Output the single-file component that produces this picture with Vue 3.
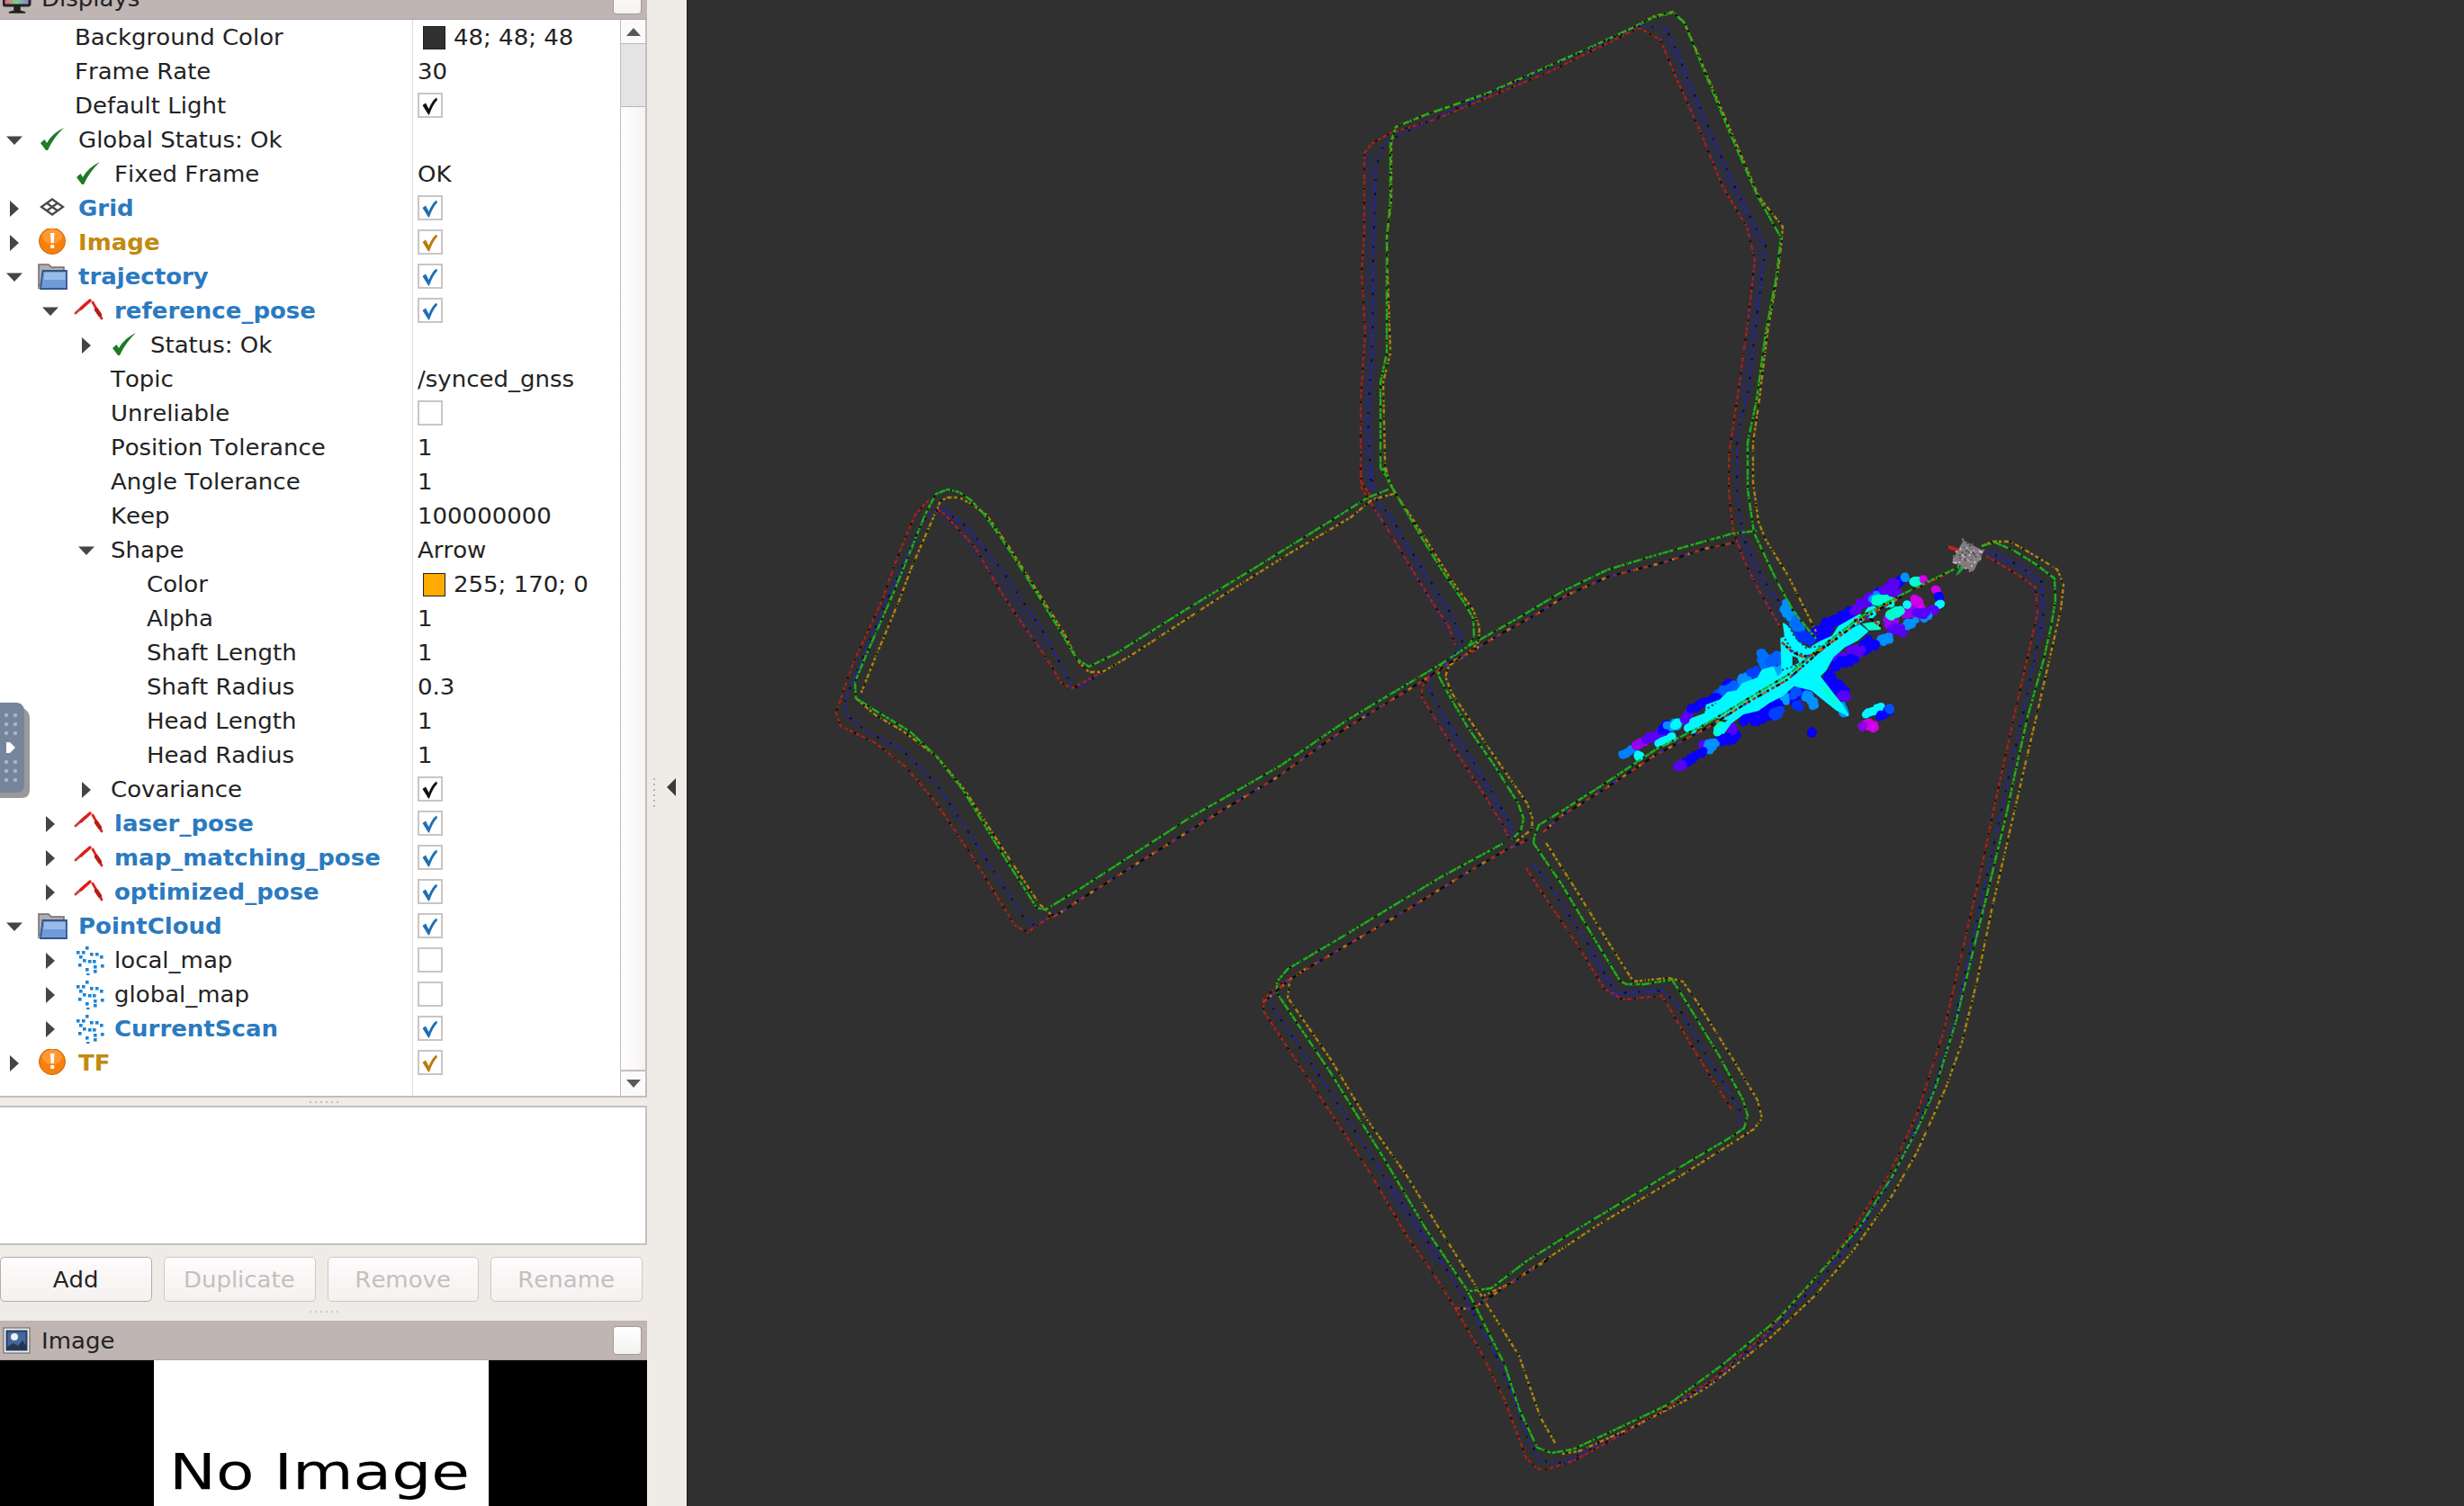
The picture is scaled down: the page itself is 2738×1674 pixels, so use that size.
<script setup>
const rows = [
  { l: 1, t: 'Background Color', sw: '#303030', v: '48; 48; 48' },
  { l: 1, t: 'Frame Rate', v: '30' },
  { l: 1, t: 'Default Light', c: 'black' },
  { l: 0, a: 'down', i: 'ok', t: 'Global Status: Ok' },
  { l: 1, i: 'ok', t: 'Fixed Frame', v: 'OK' },
  { l: 0, a: 'right', i: 'grid', t: 'Grid', k: 'blue', c: 'blue' },
  { l: 0, a: 'right', i: 'warn', t: 'Image', k: 'gold', c: 'gold' },
  { l: 0, a: 'down', i: 'folder', t: 'trajectory', k: 'blue', c: 'blue' },
  { l: 1, a: 'down', i: 'pose', t: 'reference_pose', k: 'blue', c: 'blue' },
  { l: 2, a: 'right', i: 'ok', t: 'Status: Ok' },
  { l: 2, t: 'Topic', v: '/synced_gnss' },
  { l: 2, t: 'Unreliable', c: 'off' },
  { l: 2, t: 'Position Tolerance', v: '1' },
  { l: 2, t: 'Angle Tolerance', v: '1' },
  { l: 2, t: 'Keep', v: '100000000' },
  { l: 2, a: 'down', t: 'Shape', v: 'Arrow' },
  { l: 3, t: 'Color', sw: '#ffaa00', v: '255; 170; 0' },
  { l: 3, t: 'Alpha', v: '1' },
  { l: 3, t: 'Shaft Length', v: '1' },
  { l: 3, t: 'Shaft Radius', v: '0.3' },
  { l: 3, t: 'Head Length', v: '1' },
  { l: 3, t: 'Head Radius', v: '1' },
  { l: 2, a: 'right', t: 'Covariance', c: 'black' },
  { l: 1, a: 'right', i: 'pose', t: 'laser_pose', k: 'blue', c: 'blue' },
  { l: 1, a: 'right', i: 'pose', t: 'map_matching_pose', k: 'blue', c: 'blue' },
  { l: 1, a: 'right', i: 'pose', t: 'optimized_pose', k: 'blue', c: 'blue' },
  { l: 0, a: 'down', i: 'folder', t: 'PointCloud', k: 'blue', c: 'blue' },
  { l: 1, a: 'right', i: 'cloud', t: 'local_map', c: 'off' },
  { l: 1, a: 'right', i: 'cloud', t: 'global_map', c: 'off' },
  { l: 1, a: 'right', i: 'cloud', t: 'CurrentScan', k: 'blue', c: 'blue' },
  { l: 0, a: 'right', i: 'warn', t: 'TF', k: 'gold', c: 'gold' },
]
const checkColors = { black: '#111', blue: '#1f6fb5', gold: '#b87a0a' }
const buttons = ['Add', 'Duplicate', 'Remove', 'Rename']
const cloudDots = [[13, 1], [3, 6], [9, 6], [18, 8], [24, 8], [29, 11], [6, 11], [10, 15], [16, 16], [21, 16], [5, 20], [22, 22], [30, 21], [22, 27], [13, 25], [14, 31]]
const gripDots = [795, 805, 815, 847, 857, 867]

/* Trajectory polylines in view coordinates, one list per pose topic. */
const green = [
  '1544,535 1534,520 1534,425 1541,392 1541,264 1545,222 1545,159 1551,141 1583,128 1652,104 1704,81 1773,50 1816,30 1838,19 1859,14 1871,24 1890,70 1924,152 1953,218 1979,264 1974,307 1962,370 1952,444 1942,492 1942,544 1949,592 1973,643 1993,680 2018,710',
  '1537,520 1547,542 1580,598 1603,635 1627,670 1637,687 1638,707 1632,718 1603,737 1598,750 1607,767 1630,807 1660,850 1687,893 1693,910 1690,923 1680,933',
  '1543,544 1520,553 1477,580 1385,637 1317,678 1239,727 1210,741 1196,732 1181,706 1150,656 1118,606 1094,572 1079,556 1066,547 1053,544 1040,549 1028,572 992,661 963,727 950,758 951,776 973,790 1011,813 1040,840 1070,878 1108,940 1152,1009 1162,1011 1200,988 1322,909 1423,851 1496,801 1603,737',
  '1632,718 1650,708 1687,687 1737,657 1787,633 1840,617 1925,593 1952,590',
  '1704,937 1705,930 1710,917 1733,903 1780,873 1840,833 1897,804 1940,778 1987,750 2020,722 2067,686 2113,661 2177,630',
  '2202,607 2217,603 2238,612 2262,627 2283,643 2284,667 2279,697 2271,733 2253,797 2239,860 2230,903 2210,986 2193,1055 2173,1137 2150,1211 2133,1250 2103,1307 2067,1363 2030,1406 1977,1465 1914,1517 1854,1561 1795,1589 1748,1611 1724,1615 1708,1609 1688,1566 1672,1517 1637,1447 1629,1432 1585,1367 1538,1288 1479,1193 1419,1104 1419,1091 1431,1077 1487,1044 1538,1013 1601,975 1673,936',
  '1704,937 1736,984 1775,1049 1800,1090 1807,1094 1827,1094 1858,1089 1874,1114 1910,1173 1937,1223 1942,1240 1938,1254 1925,1263 1854,1305 1755,1365 1696,1402 1657,1432 1633,1435',
]
const orange = [
  '1550,548 1539,525 1539,514 1537,425 1545,392 1542,307 1541,264 1546,222 1546,159 1551,141 1583,128 1652,104 1704,81 1773,50 1816,30 1838,18 1859,13 1872,26 1891,70 1926,152 1954,218 1981,252 1979,275 1975,307 1964,370 1955,444 1948,492 1948,536 1954,580 1962,600 1987,640 2018,702',
  '1540,520 1543,535 1553,552 1583,597 1613,645 1637,678 1644,697 1643,713 1633,725 1610,740 1606,752 1613,770 1633,800 1667,850 1697,893 1703,910 1702,922 1685,935',
  '1549,549 1525,555 1501,575 1433,615 1360,661 1259,727 1225,747 1210,747 1198,735 1182,703 1152,656 1120,606 1096,572 1079,560 1066,553 1053,553 1045,557 1012,633 999,668 973,730 957,770',
  '951,776 973,795 1004,813 1041,841 1072,878 1112,940 1155,1005 1171,1019',
  '2202,607 2214,602 2234,602 2255,614 2286,633 2293,650 2290,677 2278,730 2262,800 2248,860 2233,925 2213,1012 2197,1090 2180,1159 2163,1207 2148,1241 2130,1281 2103,1328 2060,1389 2017,1440 1967,1487 1900,1540 1874,1556 1815,1586 1755,1613 1736,1616',
  '1728,1604 1712,1576 1706,1559 1688,1507 1649,1445 1637,1425 1597,1362 1562,1305 1518,1243 1479,1178 1431,1109 1433,1089 1455,1074',
  '1718,937 1748,984 1787,1047 1815,1091 1854,1087 1870,1091 1886,1114 1926,1178 1953,1223 1958,1243 1949,1255 1874,1303 1775,1362 1677,1427 1649,1440',
]
const red = [
  '1523,551 1512,535 1512,444 1517,370 1513,303 1516,259 1516,170 1525,159 1545,148 1594,133 1659,106 1721,80 1780,51 1821,31 1845,44 1862,85 1891,150 1914,207 1941,252 1950,289 1943,351 1933,425 1921,507 1921,547 1926,590 1938,623 1955,657 1978,697',
  '1512,520 1513,543 1527,565 1540,585 1563,623 1590,667 1610,697 1617,717',
  '1610,738 1593,750 1580,763 1580,775 1597,803 1623,843 1647,880 1670,917 1677,933',
  '1225,747 1191,765 1179,759 1162,730 1128,682 1108,651 1084,609 1050,572 1040,565',
  '1032,556 1017,572 997,620 980,668 948,737 929,792 934,807 973,826 1006,852 1040,892 1079,950 1128,1029 1142,1036 1171,1016',
  '2165,637 2130,654',
  '2207,618 2241,638 2262,653 2264,680 2257,713 2241,783 2224,860 2200,973 2180,1059 2160,1146 2130,1239 2100,1304 2050,1380 2013,1426 1960,1485 1900,1536 1803,1594 1748,1624 1716,1634 1708,1632 1696,1621 1672,1556 1645,1502 1617,1454 1597,1422 1562,1372 1522,1303 1463,1213 1404,1124 1404,1111 1419,1096 1455,1076',
  '1696,965 1708,984 1752,1049 1783,1099 1803,1111 1847,1107 1886,1173 1926,1236',
]
const blue = [
  '1524,545 1523,533 1520,462 1525,388 1526,277 1529,185 1538,159 1597,130 1738,67 1824,28 1852,33 1859,48 1876,89 1902,150 1931,215 1962,274 1957,314 1950,370 1943,433 1930,488 1930,551 1938,600 1959,643 1983,677',
  '1522,523 1530,557 1545,573 1560,600 1590,647 1613,683 1625,713 1613,733 1590,752 1588,765 1603,793 1627,830 1653,873 1677,913 1682,933',
  '1225,748 1200,764 1191,763 1176,733 1157,699 1113,633 1074,585 1045,565 1026,578 985,668 939,778 941,795 963,813 1002,833 1040,871 1084,937 1137,1019 1150,1029 1176,1012',
  '2207,613 2241,627 2269,647 2271,680 2260,737 2245,807 2233,860 2210,964 2187,1068 2167,1155 2147,1215 2103,1309 2063,1374 2020,1426 1963,1485 1900,1538 1803,1594 1736,1626 1712,1624 1696,1596 1684,1559 1665,1512 1633,1452 1605,1407 1538,1308 1471,1203 1415,1121 1411,1109',
  '1704,960 1724,987 1763,1047 1795,1104 1847,1101 1862,1114 1902,1183 1933,1233 1933,1253',
]
/* Stretches where several pose traces lie on top of each other. */
const shared = [
  '1171,1019 1200,1000 1268,957 1356,902 1419,864 1496,809 1579,758 1612,736 1640,722',
  '1633,725 1667,705 1707,683 1740,662 1787,641 1849,625 1894,610 1928,603',
  '1404,1114 1433,1089 1455,1075 1554,1017 1617,978 1640,964 1673,945 1700,932',
  '1715,925 1733,908 1780,879 1840,839 1897,809 1940,782 1987,755 2022,724 2067,690 2113,663',
  '2060,689 2078,688 2090,696',
  '1980,714 1992,725 2003,730 2016,728 2028,718',
  '1617,1454 1636,1455 1676,1428 1720,1400',
]
const haze = [
  '1521,540 1520,450 1524,370 1523,280 1524,170',
  '1848,34 1866,70 1880,110 1905,170 1935,225 1955,275 1951,330 1944,390 1936,445',
  '1527,562 1550,592 1575,638 1620,712',
  '1592,790 1615,822 1650,876 1678,925',
  '1048,566 1074,594 1110,645 1160,722',
  '1934,600 1950,640 1978,690',
  '2210,614 2250,634 2267,660 2266,710',
  '1536,1310 1560,1345 1600,1405',
  '1765,1058 1796,1106 1846,1102',
]

/* Lidar scan: deterministic scatter of round points around short segments. */
let seed = 7
const rnd = () => {
  seed = (seed * 16807) % 2147483647
  return seed / 2147483647
}
const B = '#0a00ff'
const V = '#5a00f5'
const L = '#0090ff'
const C = '#00f8ff'
const T = '#00ffd0'
const M = '#d000e8'
const strips = [
  [720, 205, 835, 155, 17, B, 22], [730, 235, 760, 205, 8, B, 5], [840, 140, 930, 90, 14, V, 14], [920, 95, 1000, 50, 14, B, 13],
  [940, 90, 985, 65, 22, V, 12], [900, 105, 920, 95, 6, L, 4], [1010, 32, 1014, 36, 4, L, 3], [1040, 45, 1056, 52, 8, T, 7],
  [1070, 40, 1074, 42, 4, M, 3], [1112, 76, 1116, 80, 6, M, 4], [1122, 96, 1126, 106, 6, B, 4], [1122, 126, 1130, 122, 4, C, 4],
  [1085, 158, 1110, 138, 8, V, 7], [1090, 160, 1070, 170, 6, L, 4], [1040, 185, 1010, 195, 10, L, 7], [1045, 110, 1055, 130, 12, M, 9],
  [1015, 150, 1040, 150, 12, '#9a00f0', 8], [960, 180, 975, 200, 15, '#9a00f0', 10], [965, 205, 1000, 215, 15, V, 10],
  [1050, 160, 1080, 155, 10, V, 6],
  [930, 245, 955, 238, 9, L, 7], [905, 250, 870, 275, 18, B, 14], [860, 275, 775, 325, 20, V, 20], [840, 300, 770, 335, 13, B, 12],
  [745, 360, 805, 425, 14, B, 18], [800, 425, 815, 432, 8, V, 5], [690, 400, 625, 438, 13, B, 14], [650, 415, 640, 425, 8, '#0050ff', 4],
  [600, 450, 545, 485, 17, B, 16], [550, 490, 480, 515, 18, B, 18], [590, 485, 560, 495, 12, '#0040ff', 6], [648, 455, 655, 468, 8, '#0030ff', 5],
  [680, 425, 710, 460, 9, L, 10], [450, 560, 395, 580, 14, B, 14], [425, 532, 440, 545, 10, V, 6], [345, 590, 335, 595, 7, V, 4],
  [375, 590, 350, 605, 12, L, 7], [340, 615, 275, 655, 6, B, 12], [270, 655, 245, 672, 9, V, 7], [65, 630, 110, 606, 5, '#0080ff', 8],
  [112, 600, 140, 585, 7, '#9a00f0', 6], [145, 580, 215, 545, 9, V, 13], [200, 545, 220, 530, 9, B, 6], [225, 530, 260, 520, 12, L, 8],
  [280, 515, 285, 495, 14, V, 8], [300, 475, 355, 445, 10, B, 12], [385, 430, 400, 420, 9, '#0050ff', 8], [415, 400, 435, 385, 9, B, 6],
  [355, 450, 385, 435, 9, B, 6], [400, 415, 470, 385, 8, '#0060ff', 8],
  [465, 380, 485, 368, 8, L, 8], [500, 360, 515, 350, 9, '#0040ff', 6], [530, 285, 545, 330, 12, '#0070ff', 12], [560, 325, 600, 300, 15, '#0060ff', 12],
  [605, 125, 640, 175, 11, L, 14], [640, 175, 660, 220, 12, '#0070ff', 12], [650, 235, 695, 240, 14, '#0030ff', 10],
  [190, 588, 215, 580, 5, C, 5], [230, 566, 233, 572, 5, C, 5], [120, 628, 126, 634, 5, C, 5], [915, 110, 960, 118, 10, T, 12],
  [900, 148, 890, 155, 8, C, 6], [880, 492, 930, 468, 5, C, 8], [920, 502, 965, 475, 6, B, 8], [955, 475, 962, 472, 5, '#0050ff', 4],
  [880, 522, 905, 535, 10, M, 9], [866, 535, 872, 530, 4, '#8a00e0', 3], [696, 550, 702, 555, 5, '#0800f0', 5],
  [960, 165, 998, 145, 8, T, 8], [1015, 125, 1020, 125, 4, C, 3], [385, 548, 405, 530, 8, T, 6], [285, 540, 310, 525, 12, C, 8], [240, 530, 250, 525, 8, C, 4],
  [800, 465, 812, 490, 7, L, 7], [575, 350, 605, 345, 8, '#00a0ff', 5], [605, 420, 610, 445, 8, '#00a0ff', 5],
]
const points = []
for (const [x1, y1, x2, y2, spread, color, n] of strips) {
  for (let i = 0; i < n * 2; i++) {
    const t = (i + 0.5) / (n * 2)
    points.push({
      x: x1 + (x2 - x1) * t + (rnd() - 0.5) * spread * 1.7,
      y: y1 + (y2 - y1) * t + (rnd() - 0.5) * spread * 1.7,
      r: 11 + rnd() * 3,
      color,
    })
  }
}
const specks = []
for (let i = 0; i < 90; i++) {
  specks.push({ x: rnd() * 28 - 14, y: rnd() * 28 - 14, c: ['#4e4a50', '#c8c0c4', '#7c7478', '#9d8f9e'][i % 4] })
}
</script>

<template>
  <div class="app">
    <div class="sidebar">
      <div class="dock">
        <div class="title top">
          <svg class="ticon" width="32" height="44" viewBox="0 0 32 44">
            <defs>
              <linearGradient id="scr" x1="0" x2="1"><stop offset="0" stop-color="#e0627e" /><stop offset=".5" stop-color="#7fcf8a" /><stop offset="1" stop-color="#8a7be0" /></linearGradient>
            </defs>
            <rect x="1" y="8" width="29" height="20" rx="2" fill="url(#scr)" stroke="#222" stroke-width="3" />
            <path d="M13 29h6v5h-6zM7 36q9-4 18 0z" fill="#222" stroke="#222" stroke-width="1.5" />
          </svg>
          <span class="txt">Displays</span><i class="float" />
        </div>
        <div class="tree">
          <div class="names">
            <div v-for="(r, i) in rows" :key="i" class="row" :style="{ paddingLeft: r.l * 40 + 'px' }">
              <svg class="arrow" width="36" height="20" viewBox="0 0 36 20">
                <path v-if="r.a === 'down'" d="M7 5.500H25L16 15z" fill="#474543" />
                <path v-if="r.a === 'right'" d="M11 1V19L21 10z" fill="#474543" />
              </svg>
              <svg v-if="r.i" class="icon" width="44" height="32" viewBox="0 0 44 32">
                <g v-if="r.i === 'ok'"><path d="M9 19L13.500 15L16 19Q22 8 35 2Q24 12 17 27H15z" fill="#1d7a28" /></g>
                <g v-if="r.i === 'grid'" fill="none" stroke="#4a4a4a" stroke-width="2.300"><path d="M22 5.500L34 14L22 22.500L10 14zM16 9.700L28 18.300M28 9.700L16 18.300" /></g>
                <g v-if="r.i === 'warn'">
                  <circle cx="22" cy="14" r="14.500" fill="#f77f0c" stroke="#c9660a" />
                  <ellipse cx="22" cy="9" rx="11" ry="8" fill="#ffa548" opacity=".7" />
                  <path d="M20 5h4.500l-.8 11h-3z" fill="#fff" /><circle cx="22.200" cy="20" r="2.300" fill="#fff" />
                </g>
                <g v-if="r.i === 'folder'">
                  <path d="M7 29V2h11l3 3h14v20H7z" fill="#b3aeab" stroke="#6f6c6c" stroke-width="1.500" />
                  <path d="M9 29L11.500 9H38V29z" fill="#6f9bd8" stroke="#31558c" stroke-width="1.800" />
                  <path d="M13.500 11H36.500V19H12.500z" fill="#a3c3ee" opacity=".8" />
                </g>
                <g v-if="r.i === 'pose'" stroke-linecap="round" fill="none">
                  <path d="M8 18L19 8" stroke="#c8443e" stroke-width="3" /><path d="M14 13L24 4" stroke="#dd1f1a" stroke-width="3.500" />
                  <path d="M27 6L37 24" stroke="#d42a24" stroke-width="2.800" /><path d="M31 14L35 20" stroke="#b81c18" stroke-width="4.500" />
                </g>
                <g v-if="r.i === 'cloud'" fill="#1b84d8"><rect v-for="(d, j) in cloudDots" :key="j" :x="d[0] + 6" :y="d[1] - 1" width="3.600" height="3.600" /></g>
              </svg>
              <span class="txt" :class="[r.k, { bare: !r.i }]">{{ r.t }}</span>
            </div>
          </div>
          <div class="values">
            <div v-for="(r, i) in rows" :key="i" class="row">
              <svg v-if="r.c" class="check" width="28" height="28" viewBox="0 0 28 28">
                <rect x="1" y="1" width="26" height="26" fill="#fff" stroke="#c9c6c2" stroke-width="2" />
                <path v-if="r.c !== 'off'" d="M5.500 14L9 11.500L12.500 18Q16 9 21 5.500L22 8Q17 13 13 24.500H12z" :fill="checkColors[r.c]" />
              </svg>
              <i v-if="r.sw" class="swatch" :style="{ background: r.sw }" />
              <span v-if="r.v" class="txt">{{ r.v }}</span>
            </div>
          </div>
          <div class="scroll">
            <div class="sbtn up"><svg width="16" height="11"><path d="M0 10L8 1L16 10z" fill="#5a5856" /></svg></div>
            <div class="thumb" />
            <div class="track" />
            <div class="sbtn down"><svg width="16" height="11"><path d="M0 1H16L8 10z" fill="#5a5856" /></svg></div>
          </div>
        </div>
        <div class="split"><i v-for="n in 6" :key="n" /></div>
        <div class="help" />
        <div class="buttons">
          <div v-for="(b, i) in buttons" :key="b" class="btn" :class="{ off: i > 0 }"><span class="txt mid">{{ b }}</span></div>
        </div>
        <div class="split low"><i v-for="n in 6" :key="n" /></div>
        <div class="title">
          <svg class="ticon" width="32" height="44" viewBox="0 0 32 44">
            <rect x="1" y="8" width="29" height="28" fill="#f2f2f2" stroke="#85807e" stroke-width="1.500" />
            <rect x="4.500" y="11.500" width="22" height="21" fill="#43679a" stroke="#253f66" stroke-width="2" />
            <circle cx="13" cy="18" r="4" fill="#e8f0fa" /><path d="M5 29L12 25L17 28L22 22L26 28V32H5z" fill="#26364e" />
          </svg>
          <span class="txt">Image</span><i class="float" />
        </div>
        <div class="image"><div class="canvas"><span class="none">No Image</span></div></div>
      </div>
      <div class="gutter">
        <div class="vdots"><i v-for="n in 6" :key="n" /></div>
        <svg width="10" height="20"><path d="M10 0V20L0 10z" fill="#3d3b39" /></svg>
      </div>
      <svg class="handle" width="34" height="108" viewBox="0 780 34 108">
        <path d="M0 786H24Q33 790 33 798V878Q33 887 24 887H0z" fill="#999" />
        <path d="M0 781H19Q27 782 27 791V872Q27 881 19 881H0z" fill="#75859b" />
        <g fill="#a9b4c3"><template v-for="y in gripDots" :key="y"><rect x="5" :y="y - 2" width="4" height="4" rx="1" /><rect x="15" :y="y - 2" width="4" height="4" rx="1" /></template></g>
        <path d="M7 825H11L17 831L11 837H7z" fill="#fff" />
      </svg>
    </div>

    <svg class="view" width="1974" height="1674" viewBox="764 0 1974 1674">
      <g class="haze"><polyline v-for="(p, i) in haze" :key="i" :points="p" /></g>
      <g class="under"><polyline v-for="(p, i) in green.concat(orange)" :key="i" :points="p" /></g>
      <g class="ln b"><polyline v-for="(p, i) in blue" :key="i" :points="p" /></g>
      <g class="ln r"><polyline v-for="(p, i) in red" :key="i" :points="p" /></g>
      <g fill="none" transform="translate(1780 630) scale(.33333)">
        <circle v-for="(p, i) in points" :key="i" :cx="p.x" :cy="p.y" :r="p.r" :fill="p.color" />
        <path fill="#00f8ff" stroke="#00f8ff" stroke-width="6" stroke-linejoin="round" d="M285 545L305 505L345 490L350 462L395 445L420 420L450 415L470 390L520 372L535 345L570 335L585 370L602 355L598 240L612 235L606 190L625 205L650 250L690 275L725 252L770 232L790 200L860 160L870 178L800 222L740 255L860 195L885 215L850 245L810 265L770 300L745 345L725 365L775 430L800 460L820 495L780 475L700 410L640 395L600 430L560 450L520 478L470 490L430 520L405 555L385 545L425 510L380 500L330 535z" />
        <path fill="#00ffd0" d="M868 190L925 180L930 210L890 212zM800 205L860 165L870 175L800 220zM715 380L760 410L785 455L770 455z" />
        <path fill="#303030" d="M635 298L652 303L658 320L635 330z" />
        <g stroke="#1a4a66" stroke-width="6" stroke-dasharray="7 8"><path d="M610 170L640 230L680 270L730 265M610 240L635 280L690 300M600 345L660 325L700 290M340 480L380 455" /></g>
      </g>
      <g class="ln o"><polyline v-for="(p, i) in orange" :key="i" :points="p" /></g>
      <g class="ln g"><polyline v-for="(p, i) in green" :key="i" :points="p" /></g>
      <template v-for="(p, i) in shared" :key="i">
        <polyline class="mix m1" :points="p" /><polyline class="mix m2" :points="p" /><polyline class="mix m3" :points="p" /><polyline class="mix m4" :points="p" />
      </template>
      <g class="ln k"><polyline v-for="(p, i) in green.concat(orange, red, blue)" :key="i" :points="p" /></g>
      <g transform="translate(2187 618)">
        <path d="M-22 -12L-10 -8V-4L-22 -8z" fill="#c8201c" /><path d="M-8 10L-14 22L-10 20L-3 12z" fill="#1f9a35" />
        <g transform="rotate(28)"><rect x="-13" y="-13" width="26" height="26" fill="#827c80" /><rect v-for="(s, i) in specks" :key="i" :x="s.x - 1" :y="s.y - 1" width="2" height="2" :fill="s.c" /></g>
      </g>
    </svg>
  </div>
</template>

<style>
body { margin: 0; overflow: hidden; }
</style>

<style scoped>
.app { display: flex; width: 2738px; height: 1674px; overflow: hidden; background: #303030; font-family: "DejaVu Sans", Verdana, sans-serif; font-size: 24.700px; font-kerning: none; color: #232323; }
.sidebar { position: relative; display: flex; width: 763px; height: 1674px; background: #efebe7; }
.dock { width: 719px; height: 1674px; display: flex; flex-direction: column; overflow: hidden; }
.txt { display: inline-block; white-space: pre; transform: scaleX(1.053); transform-origin: 0 50%; }
.mid { transform-origin: 50% 50%; }
.blue { color: #2b7abf; font-weight: bold; }
.gold { color: #c28a10; font-weight: bold; }
.title { flex: none; box-sizing: border-box; height: 44px; background: #bfb5b3; display: flex; align-items: center; padding: 0 6px 0 3px; border-bottom: 1px solid #aca3a1; }
.title.top { margin-top: -22px; height: 44px; }
.title .txt { margin-left: 11px; position: relative; top: 1px; }
.title.top .txt { top: -1px; }
.ticon { flex: none; }
.float { margin-left: auto; width: 32px; height: 32px; box-sizing: border-box; border: 1px solid #a39a98; border-radius: 4px; background: linear-gradient(#fff, #f5f2f1); }
.tree { flex: none; height: 1198px; display: flex; background: #fff; box-sizing: border-box; border-right: 2px solid #c5bdbb; border-bottom: 2px solid #c5bdbb; }
.names { width: 459px; box-sizing: border-box; border-right: 1px solid #dcdcdc; overflow: hidden; padding-top: 1px; }
.values { width: 230px; padding-top: 1px; }
.row { height: 38px; display: flex; align-items: center; line-height: 38px; box-sizing: border-box; }
.arrow { flex: none; }
.icon { flex: none; margin-right: 7px; }
.bare { margin-left: 7px; }
.values .row { padding-left: 5px; }
.check { position: relative; top: -1px; }
.swatch { width: 23px; height: 24px; margin: 0 9px 0 6px; border: 1.500px solid #222; }
.scroll { width: 27px; display: flex; flex-direction: column; border-left: 1px solid #c5bdbb; }
.sbtn { display: flex; justify-content: center; align-items: center; background: #fbfafa; }
.up { height: 26px; border-bottom: 1px solid #bdb7b4; }
.thumb { height: 69px; background: #e4e4e4; border-bottom: 1px solid #bdb7b4; }
.track { flex: 1; background: linear-gradient(90deg, #fff, #f6f2f2); }
.down { height: 27px; border-top: 2px solid #c5bdbb; }
.split { flex: none; height: 9px; display: flex; justify-content: center; align-items: center; gap: 4px; }
.split i { width: 2px; height: 2px; background: #c2bcb8; }
.help { flex: none; height: 155px; box-sizing: border-box; background: #fff; border: 2px solid #c5c0bd; border-left: 0; }
.buttons { flex: none; display: flex; gap: 13px; padding: 13px 5px 0 0; height: 50px; }
.btn { flex: 1; box-sizing: border-box; border: 1.500px solid #b4aeaa; border-radius: 5px; background: linear-gradient(#fefcfc, #f4f1f0); display: flex; align-items: center; justify-content: center; }
.btn.off { color: #c3c0be; border-color: #cec8c5; }
.low { height: 20px; padding-top: 1px; }
.low i { opacity: .7; }
.image { flex: 1; background: #000; display: flex; }
.canvas { width: 372px; margin-left: 171px; background: #fff; position: relative; overflow: hidden; }
.none { position: absolute; left: 17px; top: 91px; font-size: 56px; line-height: 66px; color: #000; white-space: pre; transform: scaleX(1.240); transform-origin: 0 0; }
.gutter { flex: 1; display: flex; align-items: flex-start; padding: 865px 0 0 7px; gap: 13px; }
.vdots { display: flex; flex-direction: column; gap: 4px; width: 2px; }
.vdots i { width: 2px; height: 2px; background: #bab4b0; }
.handle { position: absolute; left: 0; top: 780px; }
.view { flex: none; background: #303030; border-left: 1px solid #1e1e1e; }
.haze polyline { fill: none; stroke: #2b2c70; stroke-opacity: .3; stroke-width: 13; stroke-linejoin: round; }
.under polyline { fill: none; stroke: #2c4a18; stroke-opacity: .6; stroke-width: 3.500; stroke-linejoin: round; }
.ln polyline { fill: none; stroke-width: 2.300; stroke-linejoin: round; }
.g polyline { stroke: #1eb022; stroke-dasharray: 7 1 4 2 9 1; }
.o polyline { stroke: #bd7d18; stroke-dasharray: 5 2 3 3; }
.r polyline { stroke: #ac2016; stroke-dasharray: 4 2 5 3; }
.b polyline { stroke: #2222b8; stroke-dasharray: 4 3 3 3; }
.k polyline { stroke: #101410; stroke-dasharray: 3 13 2 19; stroke-dashoffset: 5; }
.mix { fill: none; stroke-width: 2.500; }
.m1 { stroke: #b52a18; stroke-dasharray: 5 7 4 8; }
.m2 { stroke: #b8791a; stroke-dasharray: 4 16; stroke-dashoffset: 12; }
.m3 { stroke: #2a2ab8; stroke-dasharray: 3 18; stroke-dashoffset: 9; }
.m4 { stroke: #0c0c0c; stroke-dasharray: 5 7 3 9; stroke-dashoffset: 6; }
</style>
